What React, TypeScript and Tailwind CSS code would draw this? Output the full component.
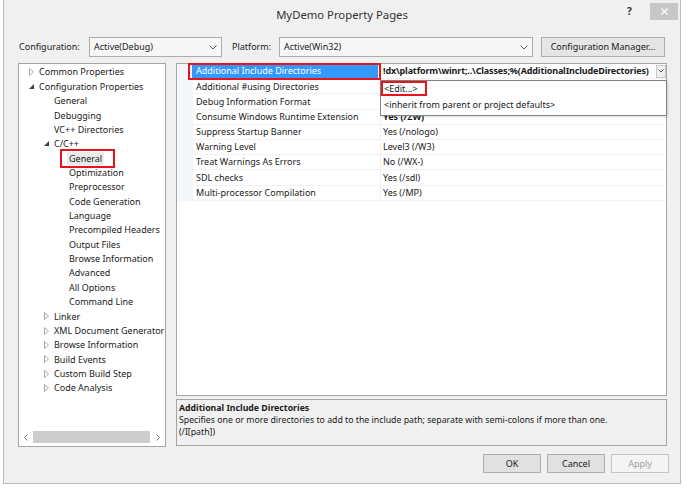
import React from "react";

type TreeItem = { label: string; level: 0 | 1 | 2; arrow?: "open" | "closed"; selected?: boolean };

const tree: TreeItem[] = [
  { label: "Common Properties", level: 0, arrow: "closed" },
  { label: "Configuration Properties", level: 0, arrow: "open" },
  { label: "General", level: 1 },
  { label: "Debugging", level: 1 },
  { label: "VC++ Directories", level: 1 },
  { label: "C/C++", level: 1, arrow: "open" },
  { label: "General", level: 2, selected: true },
  { label: "Optimization", level: 2 },
  { label: "Preprocessor", level: 2 },
  { label: "Code Generation", level: 2 },
  { label: "Language", level: 2 },
  { label: "Precompiled Headers", level: 2 },
  { label: "Output Files", level: 2 },
  { label: "Browse Information", level: 2 },
  { label: "Advanced", level: 2 },
  { label: "All Options", level: 2 },
  { label: "Command Line", level: 2 },
  { label: "Linker", level: 1, arrow: "closed" },
  { label: "XML Document Generator", level: 1, arrow: "closed" },
  { label: "Browse Information", level: 1, arrow: "closed" },
  { label: "Build Events", level: 1, arrow: "closed" },
  { label: "Custom Build Step", level: 1, arrow: "closed" },
  { label: "Code Analysis", level: 1, arrow: "closed" },
];

const props: { name: string; value: string; bold?: boolean }[] = [
  { name: "Additional Include Directories", value: "!dx\\platform\\winrt;..\\Classes;%(AdditionalIncludeDirectories)", bold: true },
  { name: "Additional #using Directories", value: "" },
  { name: "Debug Information Format", value: "" },
  { name: "Consume Windows Runtime Extension", value: "Yes (/ZW)", bold: true },
  { name: "Suppress Startup Banner", value: "Yes (/nologo)" },
  { name: "Warning Level", value: "Level3 (/W3)" },
  { name: "Treat Warnings As Errors", value: "No (/WX-)" },
  { name: "SDL checks", value: "Yes (/sdl)" },
  { name: "Multi-processor Compilation", value: "Yes (/MP)" },
];

const indent = ["pl-[5px]", "pl-[20px]", "pl-[35px]"];

function Chevron() {
  return (
    <svg width="8" height="5" viewBox="0 0 8 5">
      <polyline points="0.5,0.5 4,4 7.5,0.5" fill="none" stroke="#5a5a5a" strokeWidth="1" />
    </svg>
  );
}

function Arrow({ kind }: { kind?: "open" | "closed" }) {
  if (kind === "closed")
    return (
      <svg width="5" height="8" viewBox="0 0 5 8">
        <path d="M0.5 0.5 L4.5 4 L0.5 7.5 Z" fill="none" stroke="#a8a8a8" strokeWidth="1" />
      </svg>
    );
  if (kind === "open")
    return (
      <svg width="5" height="5" viewBox="0 0 5 5">
        <path d="M5 0 L5 5 L0 5 Z" fill="#404040" />
      </svg>
    );
  return null;
}

export default function App() {
  return (
    <div className="w-[686px] h-[488px] bg-white overflow-hidden font-['Noto_Sans',sans-serif] text-[9px] text-[#1a1a1a] whitespace-nowrap">
      <div className="ml-[3px] w-[678px] h-[484px] bg-[#f0f0f0] border-l border-r border-b border-[#bcbcbc] flex flex-col">
        {/* title bar */}
        <div className="relative h-[37px] flex justify-center pt-[7px]">
          <span className="text-[11.3px] text-[#333]">MyDemo Property Pages</span>
          <span className="absolute left-[623px] top-[4px] text-[10px] font-bold text-[#333]">?</span>
          <div className="absolute left-[646px] top-[3px] w-[28px] h-[17px] bg-[#c7c7c7] flex items-center justify-center">
            <svg width="7" height="7" viewBox="0 0 7 7">
              <path d="M0.5 0.5 L6.5 6.5 M6.5 0.5 L0.5 6.5" stroke="#fff" strokeWidth="1.2" />
            </svg>
          </div>
        </div>

        {/* toolbar */}
        <div className="flex items-center h-[20px] pl-[15px]">
          <span className="w-[70px]">Configuration:</span>
          <div className="w-[133px] h-[20px] border border-[#acacac] bg-[#f7f7f7] flex items-center justify-between pl-[4px] pr-[4px]">
            <span>Active(Debug)</span>
            <Chevron />
          </div>
          <span className="ml-[10px] w-[47px]">Platform:</span>
          <div className="w-[254px] h-[20px] border border-[#acacac] bg-[#f7f7f7] flex items-center justify-between pl-[4px] pr-[4px]">
            <span>Active(Win32)</span>
            <Chevron />
          </div>
          <div className="ml-[8px] w-[124px] h-[20px] border border-[#acacac] bg-[#e5e5e5] flex items-center justify-center">
            Configuration Manager...
          </div>
        </div>

        {/* main */}
        <div className="flex mt-[6px] pl-[14px] gap-[10px]">
          {/* tree */}
          <div className="w-[148px] h-[384px] border border-[#a5a5a5] bg-white flex flex-col justify-between overflow-hidden">
            <div className="pt-[1px]">
              {tree.map((t, i) => (
                <div key={i} className={`flex items-center h-[14.36px] ${indent[t.level]}`}>
                  <span className="w-[15px] shrink-0 flex justify-center items-center">
                    <Arrow kind={t.arrow} />
                  </span>
                  {t.selected ? (
                    <span className="relative bg-[#ebebeb] px-[2px] -ml-[2px]">
                      {t.label}
                      <span className="absolute -left-[7px] -right-[11px] -top-[3px] -bottom-[3px] border-2 border-[#e8141b]" />
                    </span>
                  ) : (
                    <span>{t.label}</span>
                  )}
                </div>
              ))}
            </div>
            <div className="h-[16px] flex items-center mb-[1px]">
              <span className="w-[14px] flex justify-center">
                <svg width="4" height="7" viewBox="0 0 4 7"><polyline points="3.5,0.5 0.5,3.5 3.5,6.5" fill="none" stroke="#777" /></svg>
              </span>
              <div className="flex-1 h-[12px] bg-[#cdcdcd]" />
              <span className="w-[15px] flex justify-center">
                <svg width="4" height="7" viewBox="0 0 4 7"><polyline points="0.5,0.5 3.5,3.5 0.5,6.5" fill="none" stroke="#777" /></svg>
              </span>
            </div>
          </div>

          {/* right column */}
          <div className="w-[491px] flex flex-col gap-[3px]">
            <div className="relative h-[333px] border border-[#a5a5a5] bg-white">
              <div className="flex">
                <div className="w-[16px] bg-[#f3f6fb] h-[137px]" />
                <div className="flex-1 min-w-0">
                  {props.map((p, i) => (
                    <div key={i} className="flex h-[15.2px] border-b border-[#f2f2f2]">
                      <div className="w-[187px] shrink-0 flex items-center">
                        {i === 0 ? (
                          <div className="relative ml-[-2px] h-full w-[188px] flex items-center">
                            <div className="absolute left-[1px] right-[1px] top-[1px] bottom-[0px] bg-[#3399ff]" />
                            <span className="relative pl-[5px] text-white">{p.name}</span>
                            <span className="absolute -left-[3px] -right-[2px] -top-[1px] -bottom-[2px] border-2 border-[#e8141b]" />
                          </div>
                        ) : (
                          <span className="pl-[3px]">{p.name}</span>
                        )}
                      </div>
                      <div className="flex-1 min-w-0 flex items-center border-l border-[#f2f2f2] pl-[2px]">
                        {i === 0 ? (
                          <div className="flex-1 min-w-0 flex items-center justify-between">
                            <span className="font-bold tracking-[-0.15px] overflow-hidden">{p.value}</span>
                            <span className="w-[10px] h-[13px] shrink-0 bg-[#f0f0f0] border border-[#c8c8c8] flex items-center justify-center">
                              <svg width="6" height="4" viewBox="0 0 6 4"><polyline points="0.5,0.5 3,3 5.5,0.5" fill="none" stroke="#555" /></svg>
                            </span>
                          </div>
                        ) : (
                          <span className={p.bold ? "font-bold" : ""}>{p.value}</span>
                        )}
                      </div>
                    </div>
                  ))}
                </div>
              </div>

              {/* dropdown popup */}
              <div className="absolute left-[203px] top-[16px] w-[287px] h-[36px] bg-white border border-[#828282] shadow-[1px_1px_2px_rgba(0,0,0,0.15)] flex flex-col">
                <div className="h-[15px] flex items-center pl-[2px]">
                  <span className="relative px-[1px]">
                    &lt;Edit...&gt;
                    <span className="absolute -left-[2px] -right-[8px] -top-[1px] -bottom-[1px] border-2 border-[#e8141b]" />
                  </span>
                </div>
                <div className="h-[15px] flex items-center pl-[3px] mt-[1px]">&lt;inherit from parent or project defaults&gt;</div>
              </div>
            </div>

            {/* description */}
            <div className="h-[47px] border border-[#a5a5a5] bg-[#f0f0f0] px-[2px] pt-[2px] leading-[12px] text-[8.75px]">
              <div className="font-bold">Additional Include Directories</div>
              <div>Specifies one or more directories to add to the include path; separate with semi-colons if more than one.</div>
              <div>(/I[path])</div>
            </div>
          </div>
        </div>

        {/* buttons */}
        <div className="flex justify-end gap-[6px] pr-[11px] mt-[7px]">
          <div className="w-[58px] h-[19px] border border-[#adadad] bg-[#e1e1e1] flex items-center justify-center">OK</div>
          <div className="w-[58px] h-[19px] border border-[#adadad] bg-[#e1e1e1] flex items-center justify-center">Cancel</div>
          <div className="w-[58px] h-[19px] border border-[#c4c4c4] bg-[#f4f4f4] flex items-center justify-center text-[#a0a0a0]">Apply</div>
        </div>
      </div>
    </div>
  );
}
